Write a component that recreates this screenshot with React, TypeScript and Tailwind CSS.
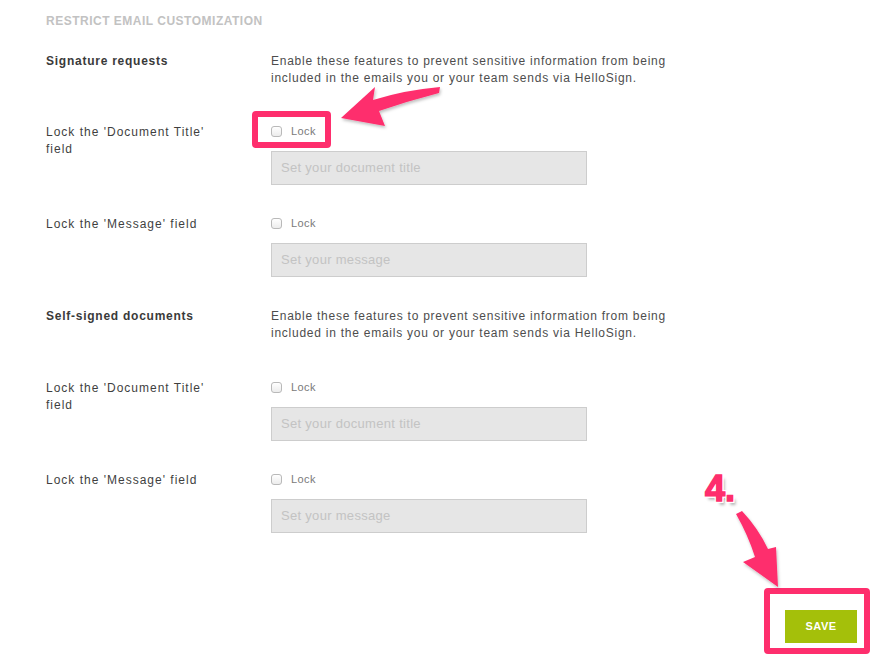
import type { ReactNode } from 'react';

const font = { fontFamily: '"Liberation Sans", Arial, sans-serif' };

function LockBox() {
  return (
    <label className="flex h-[17px] items-center gap-[9px]">
      <span className="block h-[11px] w-[11px] rounded-[3px] border border-[#b9b9b9] bg-gradient-to-b from-white to-[#ececec]" />
      <span className="text-[11px] tracking-[0.4px] text-[#7a7a7a]">Lock</span>
    </label>
  );
}

function LockRow({ label, placeholder, mb }: { label: ReactNode; placeholder: string; mb: string }) {
  return (
    <div className={`grid grid-cols-[225px_1fr] ${mb}`}>
      <p className="pt-px text-[12px] leading-[17px] tracking-[1px] text-[#3f3f3f]">{label}</p>
      <div>
        <LockBox />
        <div className="mt-[11px] flex h-[34px] w-[316px] items-center border border-[#cdcdcd] bg-[#e6e6e6] px-[9px] text-[13px] tracking-[0.3px] text-[#c3c3c3]">
          {placeholder}
        </div>
      </div>
    </div>
  );
}

function SectionHead({ title, mb }: { title: string; mb: string }) {
  return (
    <div className={`grid grid-cols-[225px_1fr] ${mb}`}>
      <p className="pt-px text-[12px] font-bold leading-[17px] tracking-[0.75px] text-[#3a3a3a]">{title}</p>
      <p className="pt-px text-[12px] leading-[17px] tracking-[0.75px] text-[#4d4d4d]">
        Enable these features to prevent sensitive information from being
        <br />
        included in the emails you or your team sends via HelloSign.
      </p>
    </div>
  );
}

export default function App() {
  return (
    <div className="relative h-[655px] w-[872px] overflow-hidden bg-white" style={font}>
      <div className="pl-[46px] pt-[12px]">
        <h2 className="pt-px text-[12px] font-bold leading-[17px] tracking-[0.5px] text-[#c2c2c2]">RESTRICT EMAIL CUSTOMIZATION</h2>

        <div className="mt-[22px]">
          <SectionHead title="Signature requests" mb="mb-[36px]" />
          <LockRow
            label={<>Lock the 'Document Title'<br />field</>}
            placeholder="Set your document title"
            mb="mb-[30px]"
          />
          <LockRow label="Lock the 'Message' field" placeholder="Set your message" mb="mb-[30px]" />

          <SectionHead title="Self-signed documents" mb="mb-[37px]" />
          <LockRow
            label={<>Lock the 'Document Title'<br />field</>}
            placeholder="Set your document title"
            mb="mb-[30px]"
          />
          <LockRow label="Lock the 'Message' field" placeholder="Set your message" mb="mb-0" />
        </div>
      </div>

      <div className="absolute left-[785px] top-[610px] flex h-[33px] w-[72px] items-center justify-center bg-[#a4c00a] text-[11px] font-bold tracking-[0.5px] text-white">
        SAVE
      </div>

      {/* annotations */}
      <div className="absolute left-[252px] top-[111px] h-[37px] w-[79px] rounded-[4px] border-[6px] border-[#fe2e6d]" />
      <div className="absolute left-[764px] top-[588px] h-[66px] w-[106px] rounded-[4px] border-[6px] border-[#fe2e6d]" />

      <svg className="absolute left-0 top-0" width="872" height="655" viewBox="0 0 872 655">
        <defs>
          <filter id="sh" x="-20%" y="-20%" width="140%" height="140%">
            <feDropShadow dx="1" dy="2" stdDeviation="1.5" floodColor="#000" floodOpacity="0.25" />
          </filter>
        </defs>
        <path
          d="M341 118 L375 87 L373 100 Q405 90 440 87 L439 93 Q408 101 379 111 L385 126 Z"
          fill="#fe2e6d"
          filter="url(#sh)"
        />
        <path
          d="M736 514 L742 511 Q758 528 768 549 L776 547 L778 587 L743 562 L755 557 Q748 535 736 514 Z"
          fill="#fe2e6d"
          filter="url(#sh)"
        />
      </svg>

      <span className="absolute left-[705px] top-[471px] text-[36px] font-bold leading-none text-[#fe2e6d] [-webkit-text-stroke:1.5px_#fe2e6d] [text-shadow:0_0_1px_#fff,0_0_2px_#fff,2px_2px_0_#fff,-2px_-2px_0_#fff,2px_-2px_0_#fff,-2px_2px_0_#fff,3px_4px_3px_rgba(0,0,0,0.3)]">
        4.
      </span>
    </div>
  );
}
